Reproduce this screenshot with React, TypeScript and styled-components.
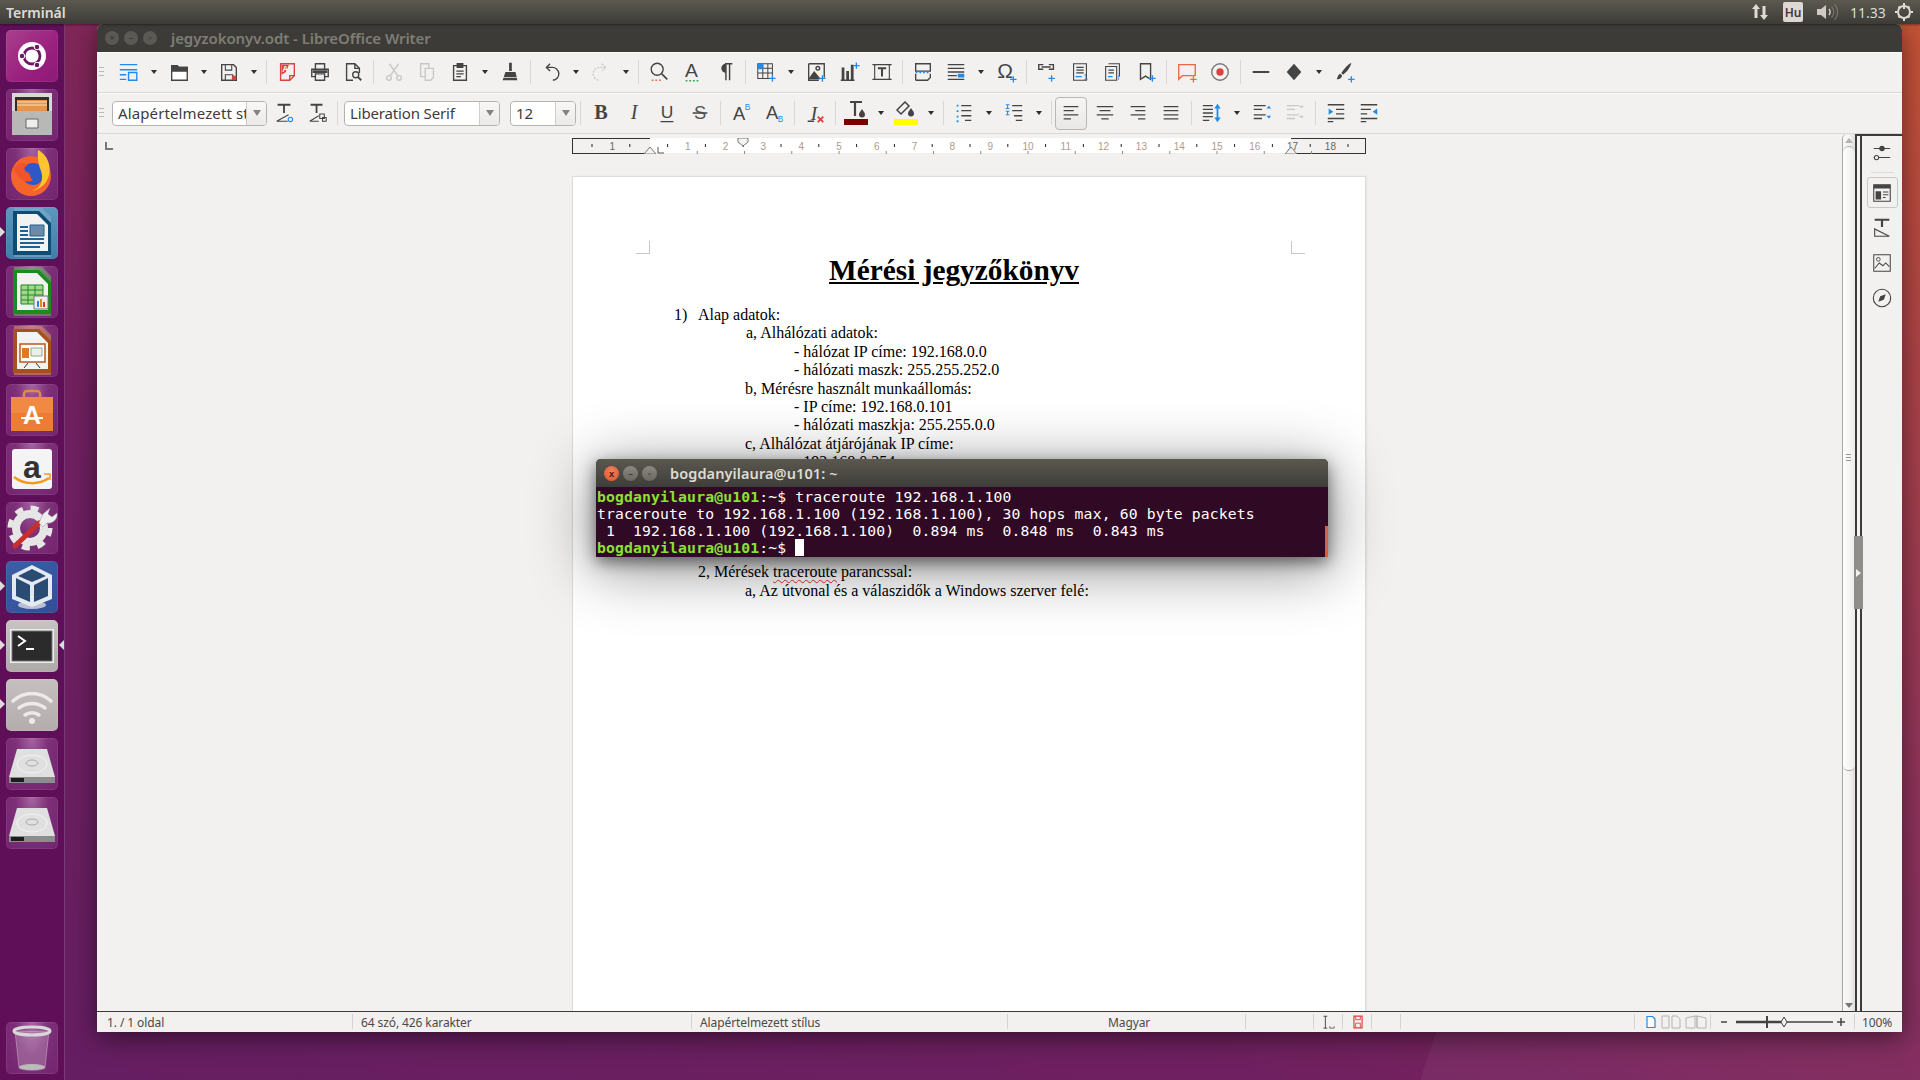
import React from 'react';
import styled, { createGlobalStyle } from 'styled-components';

const Global = createGlobalStyle`
  html, body { margin: 0; padding: 0; background: #300a24; overflow: hidden; }
  * { box-sizing: border-box; }
`;

const UI = `"Noto Sans", "Open Sans", sans-serif`;
const D = '#444444';
const B = '#1f8ceb';
const R = '#d8433f';
const L = '#c8c8c6';

const Desktop = styled.div`
  position: relative; width: 1920px; height: 1080px; overflow: hidden;
  background:
    linear-gradient(108deg, transparent 78%, rgba(255,255,255,.045) 78%),
    linear-gradient(28deg, #651e62 0%, #6f2060 32%, #8a2a54 62%, #a83a40 82%, #c54d2b 100%);
`;
const TopPanel = styled.header`
  position: absolute; left: 0; top: 0; width: 1920px; height: 24px; display: flex; align-items: center;
  padding-left: 6px; color: #dfdbd2; font: 600 14px ${UI};
  background: linear-gradient(#5b594f, #3c3b37); z-index: 5; box-shadow: 0 1px 2px rgba(0,0,0,.4);
`;
const PanelTitle = styled.span` flex: 1; `;
const PanelSlot = styled.div<{ $w: number }>`
  width: ${p => p.$w}px; height: 24px; display: flex; align-items: center; justify-content: center; font-weight: 400; font-size: 14px;
`;
const HuBox = styled.span`
  width: 20px; height: 20px; border-radius: 2px; background: #dcd9d2; color: #3c3b37; font: 600 12px ${UI};
  display: flex; align-items: center; justify-content: center;
`;
const Launcher = styled.nav`
  position: absolute; left: 0; top: 24px; width: 65px; height: 1056px; padding: 6px 0 0 6px;
  display: flex; flex-direction: column; gap: 7px; background: #5f0f58; border-right: 1px solid #7a3a75; z-index: 3;
`;
const Tile = styled.div<{ $bg?: string }>`
  position: relative; width: 52px; height: 52px; border-radius: 5px; flex: none;
  background: ${p => p.$bg || 'radial-gradient(ellipse at 50% 0%, #a565a0 0%, #7d2f78 45%, #74246f 100%)'};
  box-shadow: inset 0 0 0 1px rgba(255,255,255,.07);
  svg { display: block; }
`;
const Spacer = styled.div` height: 159px; flex: none; `;
const Pip = styled.i<{ $side: 'l' | 'r' }>`
  position: absolute; top: 20px; width: 0; height: 0; border-style: solid; border-color: transparent;
  ${p => p.$side === 'l'
    ? 'left: -6px; border-width: 5px 0 5px 5px; border-left-color: #dcdcdc;'
    : 'right: -6px; border-width: 5px 5px 5px 0; border-right-color: #dcdcdc;'}
`;

const Win = styled.main`
  position: absolute; left: 97px; top: 24px; width: 1805px; height: 1008px; display: flex; flex-direction: column;
  background: #f2f1f0; border-radius: 6px 6px 0 0; box-shadow: 0 6px 26px rgba(0,0,0,.5); overflow: hidden;
`;
const TitleBar = styled.div`
  height: 28px; flex: none; background: #3c3b37; display: flex; align-items: center; padding-left: 8px; gap: 5px;
`;
const WinDot = styled.span`
  width: 14px; height: 14px; border-radius: 50%; background: #5a5954; color: #3c3b37; font: 700 9px/14px ${UI}; text-align: center;
`;
const WinTitle = styled.span` margin-left: 9px; color: #7f7d76; font: 600 15px ${UI}; letter-spacing: -.08px; `;
const Bar = styled.div`
  height: 41px; flex: none; display: flex; align-items: center; border-bottom: 1px solid #d9d8d5; padding: 0 0 1px 2px; position: relative;
  border-top: 1px solid #fbfbfa;
`;
const Grip = styled.span`
  width: 5px; height: 11px; flex: none; margin-right: 8px;
  background: repeating-linear-gradient(#b9b8b4 0 1px, transparent 1px 4px);
`;
const Btn = styled.span`
  width: 33px; height: 33px; flex: none; display: flex; align-items: center; justify-content: center;
`;
const Drop = styled.span`
  width: 17px; height: 33px; flex: none; display: flex; align-items: center; justify-content: center;
  &::after { content: ''; border-style: solid; border-width: 4px 3.5px 0; border-color: #2e2e2e transparent transparent; }
`;
const Sep = styled.span<{ $w?: number }>`
  width: ${p => p.$w || 8}px; height: 24px; flex: none; display: flex; justify-content: center;
  &::after { content: ''; width: 1px; background: #d8d7d4; }
`;
const Active = styled(Btn)`
  width: 32px; border: 1px solid #b9b7b3; border-radius: 4px; background: linear-gradient(#f6f5f4, #e9e8e6); margin-right: 1px;
`;
const Combo = styled.div<{ $w: number; $ml?: number }>`
  width: ${p => p.$w}px; margin-left: ${p => p.$ml || 0}px; height: 25px; flex: none; display: flex; background: #fff;
  border: 1px solid #b5b3af; border-radius: 4px; overflow: hidden;
`;
const ComboText = styled.span<{ $ls?: number }>`
  flex: 1; min-width: 0; padding-left: 5px; font: 400 15px/23px ${UI}; color: #3c3c3c; white-space: nowrap; letter-spacing: ${p => p.$ls ?? -0.15}px;
`;
const ComboArrow = styled.span`
  width: 20px; flex: none; display: flex; align-items: center; justify-content: center;
  border-left: 1px solid #cfcdc9; background: linear-gradient(#f8f7f6, #eceae8);
  &::after { content: ''; border-style: solid; border-width: 6px 4px 0; border-color: #85837f transparent transparent; }
`;

const Body = styled.div` flex: 1; min-height: 0; display: flex; `;
const Center = styled.div` flex: 1; min-width: 0; display: flex; flex-direction: column; `;
const RulerRow = styled.div`
  height: 20px; flex: none; display: flex; align-items: flex-end; padding-left: 8px;
  svg { display: block; }
`;
const Corner = styled.svg` margin-bottom: 4px; flex: none; `;
const RulerWrap = styled.div` margin-left: 459px; height: 16px; `;
const Workspace = styled.div` flex: 1; min-height: 0; padding: 22px 0 0 475px; `;
const Page = styled.article`
  position: relative; width: 794px; height: 100%; background: #fff; border: 1px solid #dcdbd8; border-bottom: 0;
  box-shadow: 1px 0 2px rgba(0,0,0,.06);
  padding-top: 75px; font: 16px/18.4px "Liberation Serif", serif; color: #000;
`;
const Crop = styled.i<{ $side: 'l' | 'r' }>`
  position: absolute; top: 64px; width: 14px; height: 13px; border-bottom: 1px solid #c6c6c6;
  ${p => p.$side === 'l' ? 'left: 63px; border-right: 1px solid #c6c6c6;' : 'left: 718px; border-left: 1px solid #c6c6c6;'}
`;
const DocTitle = styled.h1`
  margin: 1px 0 19px 256px; font: 700 29.33px/34px "Liberation Serif", serif; text-decoration: underline; white-space: nowrap;
`;
const Line = styled.div<{ $x: number }>` padding-left: ${p => p.$x}px; height: 18.4px; white-space: pre; `;
const ListNo = styled.span` display: inline-block; width: 24px; `;
const Wavy = styled.span` text-decoration: underline wavy #e0302a 1px; text-underline-offset: 2px; `;

const Scroll = styled.div`
  position: relative; width: 13px; flex: none; background: linear-gradient(90deg, #fafafa, #f2f1f0 60%, #dedddb);
  border-left: 1.5px solid #a9a7a4; border-top-left-radius: 5px; display: flex; flex-direction: column;
`;
const ScrollBtn = styled.div<{ $up?: boolean }>`
  height: 12px; flex: none; display: flex; align-items: center; justify-content: center;
  &::after { content: ''; border-style: solid; border-color: ${p => p.$up ? 'transparent transparent #b5b3b0' : '#7a7875 transparent transparent'}; border-width: ${p => p.$up ? '0 4px 5px' : '5px 4px 0'}; }
`;
const Thumb = styled.div`
  height: 625px; flex: none; background: linear-gradient(90deg, #fff, #ececea); border-top: 1.5px solid #a9a7a4; border-bottom: 1.5px solid #a9a7a4;
  border-radius: 6px 6px 5px 5px; position: relative;
`;
const ThumbGrip = styled.i`
  position: absolute; left: 3px; top: 307px; width: 5px; height: 9px; background: repeating-linear-gradient(#9a9996 0 1px, transparent 1px 3px);
`;
const Track = styled.div` flex: 1; `;
const Splitter = styled.div`
  position: relative; width: 7px; flex: none; background: #f5f4f3;
  border-left: 2px solid #3c3b37; border-right: 2px solid #3c3b37; border-top: 2px solid #3c3b37;
`;
const SplitHandle = styled.div`
  position: absolute; left: -3px; top: 400px; width: 9px; height: 73px; background: #8f8e8b; display: flex; align-items: center; justify-content: center; padding-top: 1px;
  &::after { content: ''; border-style: solid; border-width: 4px 0 4px 5px; border-color: transparent transparent transparent #f0f0ee; }
`;
const Side = styled.aside`
  width: 40px; flex: none; border-top: 2px solid #3c3b37; display: flex; flex-direction: column; align-items: center; padding-top: 1px;
`;
const SideBtn = styled.div<{ $on?: boolean }>`
  width: 31px; height: 31px; margin-bottom: 4px; display: flex; align-items: center; justify-content: center; border-radius: 3px;
  border: 1px solid ${p => p.$on ? '#c9c8c5' : 'transparent'};
`;
const SideSep = styled.div` width: 23px; height: 1px; background: #dcdbd8; margin: 0 0 4px; `;

const Status = styled.footer`
  height: 21px; flex: none; display: flex; border-top: 1.5px solid #3c3b37; background: #f2f1ef; color: #4a4a48; font: 400 12px/19px ${UI}; letter-spacing: -.1px;
`;
const Cell = styled.div<{ $w?: number; $pl?: number; $end?: boolean }>`
  ${p => p.$w ? `width: ${p.$w}px; flex: none;` : 'flex: 1;'}
  padding-left: ${p => p.$pl ?? 8}px; display: flex; align-items: center; gap: 4px; position: relative; white-space: nowrap;
  ${p => p.$end ? '' : `&::after { content: ''; position: absolute; right: 0; top: 2px; bottom: 3px; width: 1px; background: #d4d3d0; }`}
`;

const Term = styled.section`
  position: absolute; left: 596px; top: 459px; width: 732px; height: 98px; border-radius: 5px 5px 0 0;
  background: #300a24; box-shadow: 0 10px 60px 4px rgba(0,0,0,.42), 0 5px 16px rgba(0,0,0,.5); z-index: 4;
`;
const TermBar = styled.div`
  height: 28px; display: flex; align-items: center; padding-left: 8px; gap: 4px; border-radius: 5px 5px 0 0;
  background: linear-gradient(#5a584f, #3e3d39);
`;
const TermDot = styled.span<{ $red?: boolean }>`
  width: 15px; height: 15px; border-radius: 50%; font: 700 9px/15px ${UI}; text-align: center; color: ${p => p.$red ? '#5b2412' : '#3c3b37'};
  background: ${p => p.$red ? 'radial-gradient(circle at 50% 35%, #f2825a, #d9532a)' : 'linear-gradient(#8a8880, #6a6860)'};
`;
const TermTitle = styled.span` margin-left: 9px; color: #dfdbd2; font: 600 14.5px ${UI}; letter-spacing: .1px; `;
const TermBody = styled.pre`
  margin: 0; padding: 1px 0 0 1px; font: 14.73px/17px "DejaVu Sans Mono", monospace; letter-spacing: .15px; color: #fff; height: 70px; overflow: hidden; position: relative;
`;
const Prompt = styled.b` color: #8ae234; font-weight: 700; `;
const Cursor = styled.i` display: inline-block; width: 9px; height: 17px; background: #fff; vertical-align: top; `;
const TermEdge = styled.i` position: absolute; right: 0; top: 39px; width: 3px; height: 31px; background: #d8603a; `;

const S = ({ children, w = 22 }: { children: React.ReactNode; w?: number }) => (
  <svg width={w} height={w} viewBox="0 0 24 24" fill="none" stroke={D} strokeWidth="1.5">{children}</svg>
);
const Plus = ({ x = 19, y = 19, c = B }: { x?: number; y?: number; c?: string }) => (
  <path d={`M${x - 3.5} ${y}h7M${x} ${y - 3.5}v7`} stroke={c} strokeWidth="1.4" />
);
const T = ({ x, y, s, f = 'Liberation Sans', c = D, w = 400, it = false, txt }: any) => (
  <text x={x} y={y} fontSize={s} fontFamily={f} fill={c} stroke="none" fontWeight={w} fontStyle={it ? 'italic' : 'normal'} textAnchor="middle">{txt}</text>
);
const lines = (arr: [number, number, number][], c = D) => arr.map(([x, y, w], i) => <path key={i} d={`M${x} ${y}h${w}`} stroke={c} strokeWidth="1.4" />);

const I: Record<string, React.ReactNode> = {
  newdoc: <S><g stroke={B}><path d="M2 4h19M2 9.5h19M2 15h7M2 20h7" /><path d="M11.5 12.5h9v8.5h-9z" /></g></S>,
  open: <S><path d="M4 5h6l1.5 2H21v14H4z" fill="#fff" /><path d="M4 5h6l1.5 2H21v4H4z" fill={D} /></S>,
  save: <S><path d="M4 4h13l3 3v14H4z" /><path d="M8 4v6h7V4M8 21v-6h8v6" strokeWidth="1.2" /><circle cx="17.5" cy="18.5" r="2.6" fill={R} stroke="none" /></S>,
  pdf: <S><path d="M5 3h15v13l-5 5H5z" stroke={R} /><path d="M6 4h8l-3 8-5 3z" fill={R} stroke="none" /><T x={10} y={12} s={9} c="#fff" w={700} txt="A" /><path d="M15 21v-5h5" stroke={R} /></S>,
  print: <S><path d="M7 9V3h10v6M7 17H3V9h18v8h-4" /><path d="M7 14h10v7H7z" /><path d="M4 10h16v3H4z" fill={D} stroke="none" /></S>,
  preview: <S><path d="M12 21H5V3h9l5 5v5M14 3v5h5" /><circle cx="15" cy="15" r="3.3" /><path d="M17.5 17.5l3.5 3.5" strokeWidth="2" /></S>,
  cut: <S><g stroke={L}><path d="M7 3l9 13M17 3L8 16" /><circle cx="6.5" cy="18.5" r="2.5" /><circle cx="17.5" cy="18.5" r="2.5" /></g></S>,
  copy: <S><g stroke={L}><path d="M5 3h9v14H5z" /><path d="M10 8h9v10l-3 3h-6z" fill="#f2f1f0" /></g></S>,
  paste: <S><path d="M5 5h14v16H5z" /><path d="M9 3h6v4H9z" fill={D} /><path d="M8 11h8M8 14h8M8 17h5" strokeWidth="1.3" /></S>,
  clone: <S><path d="M11 2h3v9h-3z" fill={D} stroke="none" /><path d="M7 12h11l2 9H4z" fill={D} stroke="none" /><path d="M4.5 18h15" stroke="#f2f1f0" strokeWidth=".8" /></S>,
  undo: <S><path d="M7 7h6a7 7 0 0 1 1 14" /><path d="M11 3L7 7l4 4" /></S>,
  redo: <S><g stroke={L} strokeDasharray="2 1.5"><path d="M17 7h-6a7 7 0 0 0-1 14" /><path d="M13 3l4 4-4 4" /></g></S>,
  find: <S><circle cx="10" cy="9" r="6.5" /><path d="M15 14l6 6" strokeWidth="1.8" /><path d="M4 21h2M8 21h2M12 21h2" stroke="#e8704f" strokeWidth="1.6" /></S>,
  charA: <S><T x={11.5} y={17} s={21} txt="A" /><path d="M5 21.5h2M9 21.5h2M13 21.5h2M17 21.5h2" stroke="#2fa84f" strokeWidth="1.6" /></S>,
  para: <S><path d="M12 3h8M13 3v18M17 3v18" strokeWidth="1.6" /><path d="M13 3a5 5 0 0 0 0 10z" fill={D} stroke="none" /></S>,
  table: <S><path d="M3 3h16v16H3zM3 8h16M3 13h16M8.5 3v16M14 3v16" strokeWidth="1.1" /><path d="M3 3h6v6H3z" fill={B} stroke="none" /><Plus /></S>,
  image: <S><path d="M4 3h17v15M4 3v18h11" /><circle cx="14" cy="8" r="2" /><path d="M4 19l6-8 5 6 2 3H4z" fill={D} stroke="none" /><Plus /></S>,
  chart: <S><path d="M3 21h15" /><path d="M4 7h3v14H4zM9 11h3v10H9zM14 4h3v17h-3z" fill={D} stroke="none" /><Plus x={20} y={5} /></S>,
  textbox: <S><path d="M4 4h16v16H4z" strokeWidth="1.2" /><path d="M1.5 4h4M18.5 4h4M1.5 20h4M18.5 20h4" strokeWidth="1.2" /><path d="M7.5 8h9M12 8v9" strokeWidth="2.2" /></S>,
  header: <S><path d="M4 3h16v8H4zM4 21v-7M20 14v4l-3 3H4" /><path d="M4 12.5h2M8 12.5h2M12 12.5h2M16 12.5h2" stroke={B} /></S>,
  field: <S>{lines([[3, 4, 18], [3, 8, 18], [3, 12, 18], [3, 16, 10], [3, 20, 18]])}<path d="M14 14h7v4h-7z" fill={B} stroke="none" /></S>,
  omega: <S><T x={11} y={19} s={23} txt="Ω" /><Plus x={20} y={20} /></S>,
  link: <S><path d="M8 4H3v5h5M14 4h5v5h-5M6 6.5h10" /><Plus x={17} y={19} /></S>,
  foot: <S><path d="M5 3h14v18H5zM8 7h8M8 10h8M8 13h8" strokeWidth="1.2" /><path d="M7 17h7" stroke={B} /><T x={18} y={21} s={9} c={B} txt="1" /></S>,
  end: <S><path d="M7 3h12v14M4 6h12v15H4z" strokeWidth="1.2" /><path d="M7 10h6M7 13h6" strokeWidth="1.2" /><path d="M6.5 17h5" stroke={B} /><T x={18} y={21} s={9} c={B} txt="i" /></S>,
  mark: <S><path d="M6 3h11v17l-5.5-3.5L6 20z" /><Plus x={19} y={19} /></S>,
  comment: <S><path d="M3 4h18v12h-14l-4 4z" stroke="#ea6a3e" /><Plus x={19} y={20} c="#ea6a3e" /></S>,
  rec: <S><circle cx="12" cy="12" r="9" stroke="#777" /><circle cx="12" cy="12" r="4" fill={R} stroke="none" /></S>,
  dash: <S><path d="M3 12h18" strokeWidth="2.4" /></S>,
  dia: <S><path d="M12 3l8 9-8 9-8-9z" fill={D} stroke="none" /></S>,
  pen: <S><path d="M20 2c-1 5-5 10-9 13l-2-2c3-4 7-9 11-11z" fill={D} stroke="none" /><path d="M8 14l2 2c-1 3-3 4-6 4 1-1 1-5 4-6z" fill={D} stroke="none" /><Plus x={20} y={20} /></S>,
  stA: <S><path d="M5 3h14M12 3v9" strokeWidth="2" /><path d="M4 21l13-7M4 21h12" strokeWidth="1.2" /><circle cx="19" cy="19" r="2.4" stroke={B} strokeWidth="1.2" /></S>,
  stB: <S><path d="M5 3h13M11.5 3v9" strokeWidth="2" /><path d="M4 21l10-6M4 21h10" strokeWidth="1.2" /><path d="M15 13h5v5h-5zM18 17h4v4h-4z" strokeWidth="1.1" fill="#f2f1f0" /></S>,
  b: <S><T x={12} y={19} s={22} f="Liberation Serif" w={700} txt="B" /></S>,
  i: <S><T x={12} y={19} s={22} f="Liberation Serif" it txt="I" /></S>,
  u: <S><T x={12} y={17} s={19} f="Liberation Sans" txt="U" /><path d="M5 21.5h14" strokeWidth="1.4" /></S>,
  s: <S><T x={12} y={19} s={20} f="Liberation Sans" c="#555" txt="S" /><path d="M4 12h16" strokeWidth="1.4" /></S>,
  sup: <S><T x={10} y={20} s={20} txt="A" /><T x={19} y={9} s={9} c={B} txt="B" /></S>,
  sub: <S><T x={10} y={18} s={20} txt="A" /><T x={19} y={22} s={9} c={B} txt="B" /></S>,
  clear: <S><T x={11} y={20} s={21} f="Liberation Serif" it txt="I" /><path d="M4 21h7" /><path d="M15 16l6 6M21 16l-6 6" stroke={R} strokeWidth="2" /></S>,
  fcolor: <S w={24}><path d="M6 1h12M11 1v14" strokeWidth="2.2" /><path d="M18 8c-2 3-3 4-3 5.500a3 3 0 0 0 6 0c0-1.500-1-2.500-3-5.500z" fill={D} stroke="none" /><path d="M0 18h24v6H0z" fill="#7a0000" stroke="none" /></S>,
  hcolor: <S w={24}><path d="M3 9l8-8 4 4-8 8z" /><path d="M17 7c-2 3-3 4-3 5.500a3 3 0 0 0 6 0c0-1.500-1-2.500-3-5.500z" fill={D} stroke="none" /><path d="M0 18h24v6H0z" fill="#ffff00" stroke="none" /></S>,
  bullet: <S>{lines([[9, 4, 11], [9, 9.500, 11], [9, 15, 11], [13, 20, 7]])}<path d="M4 3h2v2H4zM4 9h2v2H4zM4 15h2v2H4zM4 20h2v2H4z" fill={B} stroke="none" /></S>,
  num: <S>{lines([[10, 4, 11], [10, 9.500, 11], [12, 15, 9], [14, 20, 7]])}<path d="M3 3h4M5 3v4M3 7h4M3 10h4M5 10v4M3 14h4" stroke={B} strokeWidth="1.1" /></S>,
  left: <S>{lines([[4, 5, 16], [4, 9.500, 11], [4, 14, 16], [4, 18.500, 8]])}</S>,
  cen: <S>{lines([[3, 5, 18], [6, 9.500, 12], [3, 14, 18], [8, 18.500, 8]])}</S>,
  right: <S>{lines([[4, 5, 16], [9, 9.500, 11], [4, 14, 16], [12, 18.500, 8]])}</S>,
  just: <S>{lines([[4, 5, 16], [4, 9.500, 16], [4, 14, 16], [4, 18.500, 16]])}</S>,
  spacing: <S>{lines([[2, 4, 11], [2, 8, 11], [2, 12, 11], [2, 16, 11], [2, 20, 7]])}<path d="M18 5v14" stroke={B} strokeWidth="2" /><path d="M14.500 7L18 2l3.500 5zM14.500 17L18 22l3.500-5z" fill={B} stroke="none" /></S>,
  incr: <S>{lines([[3, 4, 13], [3, 8, 9], [3, 14, 13], [3, 18, 9]])}<path d="M17 7l2.500-3L22 7zM17 15l2.500 3 2.500-3z" fill={B} stroke="none" /></S>,
  decr: <S>{lines([[3, 4, 13], [3, 8, 9], [3, 14, 13], [3, 18, 9]], L)}<path d="M17 4h4v2h-4zM17 15h4v2h-4z" fill={L} stroke="none" /></S>,
  ind: <S>{lines([[3, 3, 18], [12, 8, 9], [12, 13, 9], [3, 18, 18], [3, 21.500, 6]])}<path d="M4 7l5 3.500-5 3.500z" fill={B} stroke="none" /></S>,
  ded: <S>{lines([[3, 3, 18], [3, 8, 11], [3, 13, 7], [3, 18, 18], [3, 21.500, 6]])}<path d="M21 7l-5 3.500 5 3.500z" fill={B} stroke="none" /></S>,
  sProps: <S><path d="M3 7h18M3 17h18" strokeWidth="1.1" /><circle cx="12" cy="7" r="3" fill={D} stroke="none" /><circle cx="6" cy="17" r="2.400" fill="#f2f1f0" strokeWidth="1.1" /></S>,
  sPage: <S><path d="M3 3h18v18H3z" strokeWidth="1.2" /><path d="M3 3h18v4H3zM5 10h6v9H5z" fill={D} stroke="none" /><path d="M13 11h6M13 14h6M13 17h3" strokeWidth="1.1" /></S>,
  sStyle: <S><path d="M4 3h16M12 3v8" strokeWidth="2.4" /><path d="M4 21V13l16 8z" strokeWidth="1.2" /></S>,
  sGal: <S><path d="M3 3h18v18H3z" strokeWidth="1.1" /><circle cx="8" cy="8" r="2" strokeWidth="1" /><path d="M4 18l5-6 4 3 3-3 4 4" strokeWidth="1.1" /></S>,
  sNav: <S><circle cx="12" cy="12" r="9.500" strokeWidth="1.2" /><path d="M16 8l-6 2-2 6 6-2z" fill={D} stroke="none" /></S>,
  iBeam: <S w={15}><path d="M4 2h6M4 21h6M7 2v19" /><path d="M14 18v3h7v-3" strokeWidth="1.2" /></S>,
  redSave: <S w={14}><path d="M5 2h14v20H5z" stroke={R} strokeWidth="2" /><path d="M8 2v6h8V2M8 22v-8h8v8" stroke={R} strokeWidth="1.5" /></S>,
  pg1: <S w={12}><path d="M4 1h11l5 5v17H4z" stroke={B} fill="#fff" strokeWidth="2.400" /></S>,
  pg2: <svg width="20" height="14" viewBox="0 0 20 14" fill="none" stroke="#b5b4b1"><path d="M1 1h7v12H1zM11 1h5l3 3v9h-8z" /></svg>,
  pg3: <svg width="22" height="14" viewBox="0 0 22 14" fill="none" stroke="#b5b4b1"><path d="M1 3l9-2v12l-9 0zM12 1l9 2v10h-9zM10 1h2v12" /></svg>,
};

const tb1: string[] = ['newdoc+', 'open+', 'save+', '|', 'pdf', 'print', 'preview', '|', 'cut', 'copy', 'paste+', 'clone', '|', 'undo+', 'redo+', '|', 'find', 'charA', 'para', '|', 'table+', 'image', 'chart', 'textbox', '|', 'header', 'field+', 'omega', '|', 'link', 'foot', 'end', 'mark', '|', 'comment', 'rec', '|', 'dash', 'dia+', 'pen'];
const tb2: string[] = ['b', 'i', 'u', 's', '|', 'sup', 'sub', '|', 'clear', '|', 'fcolor+', 'hcolor+', '|', 'bullet+', 'num+', '|', '*left', 'cen', 'right', 'just', '|', 'spacing+', 'incr', 'decr', '|', 'ind', 'ded'];

const Items = ({ list }: { list: string[] }) => (
  <>
    {list.map((n, k) => {
      if (n === '|') return <Sep key={k} />;
      const plus = n.endsWith('+');
      const sel = n.startsWith('*');
      const name = n.replace('+', '').replace('*', '');
      const Wrap = sel ? Active : Btn;
      return <React.Fragment key={k}><Wrap>{I[name]}</Wrap>{plus && <Drop />}</React.Fragment>;
    })}
  </>
);

const RulerSvg = () => {
  const cm = 37.8, o = 78;
  const nums = Array.from({ length: 20 }, (_, i) => i - 1).filter(v => v !== 0);
  return (
    <svg width="794" height="16" viewBox="0 0 794 16" fontFamily="Liberation Sans">
      <rect x="0.500" y="0.500" width="793" height="15" fill="#f2f1f0" stroke="#333" />
      <rect x={o} y="0" width="641" height="16" fill="#fff" />
      <path d={`M${o} 15.500h641`} stroke="#eee" />
      {Array.from({ length: 21 }, (_, i) => i).map(i => (
        <path key={i} d={`M${20 + i * cm} 6v3`} stroke="#222" />
      ))}
      {nums.map(v => (
        <text key={v} x={o + v * cm} y="12" fontSize="10" fill={v > 16 || v < 0 ? '#666' : '#b09a8a'} textAnchor="middle">{Math.abs(v)}</text>
      ))}
      {Array.from({ length: 14 }, (_, i) => i + 1).map(i => <path key={i} d={`M${o + i * 47.25} 13v3`} stroke="#8a8a88" />)}
      <path d={`M${o - 6} 16l6-7 6 7z M${o + 641 - 6} 16l6-7 6 7z`} fill="#f4f4f2" stroke="#777" />
      <path d={`M${o + 93 - 5} 0h10v4l-5 4-5-4z`} fill="#f4f4f2" stroke="#777" />
      <path d={`M${o + 8} 9v6h6`} stroke="#555" fill="none" />
    </svg>
  );
};

const V = ({ children }: { children: React.ReactNode }) => <svg width="52" height="52" viewBox="0 0 52 52">{children}</svg>;
const Doc = ({ edge, corner, children }: any) => (
  <V>
    <path d="M8 1h28l9 9v40H8z" fill={corner} opacity=".55" />
    <path d="M7 4h26l12 12v32H7z" fill={edge} />
    <path d="M11 7h20l11 11v26H11z" fill="#f2f2f0" />
    {children}
  </V>
);
const Disk = () => (
  <V>
    <path d="M11 11h30l8 28H3z" fill="#e0e0e0" />
    <ellipse cx="26" cy="26" rx="15" ry="9" fill="none" stroke="#f4f4f4" />
    <ellipse cx="26" cy="25" rx="6" ry="3" fill="none" stroke="#aaa" />
    <path d="M3 39h46v6H3z" fill="#8d8d8d" /><path d="M5 40h13v4H5z" fill="#1d1d1d" />
  </V>
);

const Apps = () => (
  <>
    <Tile $bg="linear-gradient(135deg,#a8408c,#9a1f7e 60%,#8e1a78)">
      <V>
        <circle cx="26" cy="26" r="14" fill="#fff" />
        <circle cx="26" cy="26" r="8" fill="none" stroke="#6d1a63" strokeWidth="2.800" />
        <circle cx="31" cy="17" r="2.800" fill="#6d1a63" stroke="#fff" /><circle cx="16" cy="26" r="2.800" fill="#6d1a63" stroke="#fff" /><circle cx="31" cy="35" r="2.800" fill="#6d1a63" stroke="#fff" />
      </V>
    </Tile>
    <Tile>
      <V>
        <path d="M6 4h40v20H6z" fill="#d8d8d6" /><path d="M9 8h34v16H9z" fill="#2e2e2e" /><path d="M11 11h30v13H11z" fill="#e8954a" /><path d="M11 13h30M11 16h30" stroke="#f6e0c0" />
        <path d="M6 22h40v24H6z" fill="#b8b8b6" /><path d="M20 30h12v9H20z" fill="#eee" stroke="#666" />
      </V>
    </Tile>
    <Tile>
      <V>
        <circle cx="25" cy="28" r="20" fill="#f5642c" /><circle cx="27" cy="26" r="11" fill="#2f57c8" />
        <path d="M32 2c12 6 15 22 8 32-3 4-8 8-14 9 9-3 12-12 9-20-2-6-4-12-3-21z" fill="#ffc52e" />
        <path d="M8 20c4-6 10-6 14-3-5 2-4 6-1 7 5 2 2 6 6 8-6 4-16 0-19-12z" fill="#f0542c" />
      </V>
    </Tile>
    <Tile $bg="linear-gradient(#5e97bf,#3e7fa9)">
      <Pip $side="l" />
      <Doc edge="#0f4c74" corner="#7fb3d0">
        <path d="M14 20h8M14 24h8M14 28h8M14 32h24M14 36h24M14 40h20" stroke="#1f6193" strokeWidth="2" />
        <path d="M24 18h14v11H24z" fill="#6a8aa8" stroke="#1f6193" />
      </Doc>
    </Tile>
    <Tile>
      <Doc edge="#1d8a1d" corner="#63c163">
        <path d="M15 19h22v19H15z" fill="#a3d98f" stroke="#1d8a1d" />
        <path d="M15 24h22M15 29h22M15 34h22M22 19v19M29 19v19" stroke="#1d8a1d" />
        <path d="M28 30h14v13H28z" fill="#eee" stroke="#777" /><path d="M31 35h2v6h-2z" fill="#2a85d0" /><path d="M34 33h2v8h-2z" fill="#e88a1a" /><path d="M37 36h2v5h-2z" fill="#d33" />
      </Doc>
    </Tile>
    <Tile>
      <Doc edge="#a8501a" corner="#d99a62">
        <path d="M14 19h25v18H14z" fill="#fff" stroke="#b85a20" strokeWidth="1.500" />
        <path d="M16 23h7v10h-7z" fill="#d87a30" /><path d="M25 23h11v8H25z" fill="#eee" stroke="#8a8" />
        <path d="M22 38l-4 5M30 38l4 5" stroke="#333" />
      </Doc>
    </Tile>
    <Tile>
      <V>
        <path d="M18 14v-4a3 3 0 0 1 3-3h10a3 3 0 0 1 3 3v4" fill="none" stroke="#e5894a" strokeWidth="2.500" />
        <path d="M5 13h42v34H5z" fill="#ee7d34" /><path d="M5 13h42v16H5z" fill="#f08a42" />
        <T x={26} y={40} s={25} c="#fff" w={700} txt="A" /><path d="M15 34h22" stroke="#fff" strokeWidth="2" />
      </V>
    </Tile>
    <Tile>
      <V>
        <rect x="6" y="6" width="40" height="40" rx="3" fill="#f4f4f4" />
        <T x={26} y={35} s={32} f="Liberation Sans" c="#333" w={700} txt="a" />
        <path d="M8 34c10 8 25 8 35 1" fill="none" stroke="#f39a1d" strokeWidth="2.500" /><path d="M38 31h6v6" fill="none" stroke="#f39a1d" strokeWidth="1.500" />
      </V>
    </Tile>
    <Tile>
      <V>
        <circle cx="24" cy="26" r="14" fill="none" stroke="#e6e6e6" strokeWidth="8" />
        <circle cx="24" cy="26" r="20" fill="none" stroke="#e6e6e6" strokeWidth="5" strokeDasharray="8 7.700" />
        <path d="M9 44L33 21" stroke="#c7302a" strokeWidth="5" strokeLinecap="round" />
        <path d="M33 21l4-9 7-6-2 6 4 3 5-4c1 6-4 11-10 10l-4 4z" fill="#eee" stroke="#999" strokeWidth=".5" />
      </V>
    </Tile>
    <Tile $bg="linear-gradient(145deg,#3c5fa8,#314f98)">
      <Pip $side="l" />
      <V>
        <ellipse cx="26" cy="44" rx="14" ry="4" fill="#b8c2d4" />
        <path d="M26 4l20 10v24L26 46 6 38V14z" fill="#e4e9f2" />
        <path d="M10 17l14 7v17l-14-6zM42 17l-14 7v17l14-6zM26 8l14 7-14 6-14-6z" fill="#2a4c72" />
      </V>
    </Tile>
    <Tile $bg="linear-gradient(#c8c4c4,#aeaaaa)">
      <Pip $side="l" /><Pip $side="r" />
      <V>
        <rect x="4" y="9" width="44" height="34" fill="#eee" />
        <rect x="6" y="11" width="40" height="30" fill="#2b2b2b" stroke="#777" />
        <path d="M12 16l7 5-7 5" fill="none" stroke="#fff" strokeWidth="2" /><path d="M20 29h8" stroke="#fff" strokeWidth="2" />
      </V>
    </Tile>
    <Tile $bg="linear-gradient(#c5bfbf,#b3adad)">
      <Pip $side="l" />
      <V>
        <g fill="none" stroke="#eeeae8" strokeWidth="3.500" strokeLinecap="round">
          <path d="M7 22c11-10 27-10 38 0" /><path d="M13 29c8-6 18-6 26 0" /><path d="M19 36c4-3 10-3 14 0" />
        </g><circle cx="26" cy="42" r="3" fill="#eeeae8" />
      </V>
    </Tile>
    <Tile><Disk /></Tile>
    <Tile><Disk /></Tile>
    <Spacer />
    <Tile>
      <V>
        <path d="M9 9l4 37c3 3 23 3 26 0l4-37z" fill="rgba(255,255,255,.22)" stroke="rgba(255,255,255,.3)" />
        <ellipse cx="26" cy="45" rx="13" ry="3" fill="#bbb" />
        <ellipse cx="26" cy="9" rx="18" ry="4" fill="none" stroke="#d8d8d8" strokeWidth="3" />
      </V>
    </Tile>
  </>
);

export default function App() {
  const doc: [number, string][] = [
    [221, '- hálózat IP címe: 192.168.0.0'],
    [221, '- hálózati maszk: 255.255.252.0'],
    [172, 'b, Mérésre használt munkaállomás:'],
    [221, '- IP címe: 192.168.0.101'],
    [221, '- hálózati maszkja: 255.255.0.0'],
    [172, 'c, Alhálózat átjárójának IP címe:'],
    [221, '- 192.168.0.254'],
    [221, ''], [221, ''], [221, ''], [221, ''], [221, ''],
  ];
  return (
    <Desktop>
      <Global />
      <TopPanel>
        <PanelTitle>Terminál</PanelTitle>
        <PanelSlot $w={42}>
          <svg width="18" height="18" viewBox="0 0 18 18" fill="#dfdbd2"><path d="M5 1l4 5H6.500v9h-3V6H1zM13 17l-4-5h2.500V3h3v9H17z" /></svg>
        </PanelSlot>
        <PanelSlot $w={24}><HuBox>Hu</HuBox></PanelSlot>
        <PanelSlot $w={43}>
          <svg width="22" height="18" viewBox="0 0 22 18" fill="none"><path d="M1 6h4l5-4v14l-5-4H1z" fill="#cfcbc2" /><path d="M13 6c1.500 2 1.500 4 0 6" stroke="#cfcbc2" strokeWidth="1.500" /><path d="M15.500 3.500c3 3.500 3 7.500 0 11M18.500 1c4 5 4 11 0 16" stroke="#77756d" strokeWidth="1.200" /></svg>
        </PanelSlot>
        <PanelSlot $w={40}>11.33</PanelSlot>
        <PanelSlot $w={32}>
          <svg width="18" height="18" viewBox="0 0 18 18" fill="none" stroke="#dfdbd2" strokeWidth="2"><circle cx="9" cy="9" r="6" /><path d="M9 0v6" /><path d="M16 9h2M0 9h2M3.500 3.500l1.500 1.500M14.500 14.500l-1.500-1.500M14.500 3.500L13 5M3.500 14.500L5 13M9 15v3" /></svg>
        </PanelSlot>
      </TopPanel>

      <Launcher><Apps /></Launcher>

      <Win>
        <TitleBar>
          <WinDot>×</WinDot><WinDot>–</WinDot><WinDot>▫</WinDot>
          <WinTitle>jegyzokonyv.odt - LibreOffice Writer</WinTitle>
        </TitleBar>
        <Bar><Grip /><Items list={tb1} /></Bar>
        <Bar>
          <Grip />
          <Combo $w={155}><ComboText $ls={.12}>Alapértelmezett st</ComboText><ComboArrow /></Combo>
          <Btn>{I.stA}</Btn><Btn>{I.stB}</Btn>
          <Sep />
          <Combo $w={156} $ml={3}><ComboText>Liberation Serif</ComboText><ComboArrow /></Combo>
          <Combo $w={66} $ml={10}><ComboText>12</ComboText><ComboArrow /></Combo>
          <Sep $w={8} />
          <Items list={tb2} />
        </Bar>
        <Body>
          <Center>
            <RulerRow>
              <Corner width="8" height="8" viewBox="0 0 8 8" fill="none" stroke="#777" strokeWidth="2"><path d="M1 0v7h7" /></Corner>
              <RulerWrap><RulerSvg /></RulerWrap>
            </RulerRow>
            <Workspace>
              <Page>
                <Crop $side="l" /><Crop $side="r" />
                <DocTitle>Mérési jegyzőkönyv</DocTitle>
                <Line $x={101}><ListNo>1)</ListNo>Alap adatok:</Line>
                <Line $x={173}>a, Alhálózati adatok:</Line>
                {doc.map(([x, t], i) => <Line key={i} $x={x}>{t}</Line>)}
                <Line $x={125}>2, Mérések <Wavy>traceroute</Wavy> parancssal:</Line>
                <Line $x={172}>a, Az útvonal és a válaszidők a Windows szerver felé:</Line>
              </Page>
            </Workspace>
          </Center>
          <Scroll>
            <ScrollBtn $up />
            <Thumb><ThumbGrip /></Thumb>
            <Track />
            <ScrollBtn />
          </Scroll>
          <Splitter><SplitHandle /></Splitter>
          <Side>
            <SideBtn>{I.sProps}</SideBtn>
            <SideSep />
            <SideBtn $on>{I.sPage}</SideBtn>
            <SideBtn>{I.sStyle}</SideBtn>
            <SideBtn>{I.sGal}</SideBtn>
            <SideBtn>{I.sNav}</SideBtn>
          </Side>
        </Body>
        <Status>
          <Cell $w={256} $pl={10}>1. / 1 oldal</Cell>
          <Cell $w={339}>64 szó, 426 karakter</Cell>
          <Cell $w={316}>Alapértelmezett stílus</Cell>
          <Cell $w={238} $pl={100}>Magyar</Cell>
          <Cell $w={68} />
          <Cell $w={29} $pl={7}>{I.iBeam}</Cell>
          <Cell $w={29} $pl={8}>{I.redSave}</Cell>
          <Cell $w={29} />
          <Cell $w={234} $pl={0} />
          <Cell $w={76} $pl={10}>{I.pg1}{I.pg2}{I.pg3}</Cell>
          <Cell $w={144} $pl={10}>
            <svg width="124" height="14" viewBox="0 0 124 14" fill="none" stroke="#444"><path d="M0 7h6M116 7h8M120 3v8M15 7h97" strokeWidth="1.500" /><path d="M15 7h48" strokeWidth="2.500" /><path d="M46 1v12" strokeWidth="2" /><path d="M63 2l3 5-3 5-3-5z" fill="#f2f1ef" /></svg>
          </Cell>
          <Cell $pl={7} $end>100%</Cell>
        </Status>
      </Win>

      <Term>
        <TermBar>
          <TermDot $red>x</TermDot><TermDot>–</TermDot><TermDot>▫</TermDot>
          <TermTitle>bogdanyilaura@u101: ~</TermTitle>
        </TermBar>
        <TermBody><Prompt>bogdanyilaura@u101</Prompt>:~$ traceroute 192.168.1.100{'\n'}traceroute to 192.168.1.100 (192.168.1.100), 30 hops max, 60 byte packets{'\n'} 1  192.168.1.100 (192.168.1.100)  0.894 ms  0.848 ms  0.843 ms{'\n'}<Prompt>bogdanyilaura@u101</Prompt>:~$ <Cursor /><TermEdge /></TermBody>
      </Term>
    </Desktop>
  );
}
